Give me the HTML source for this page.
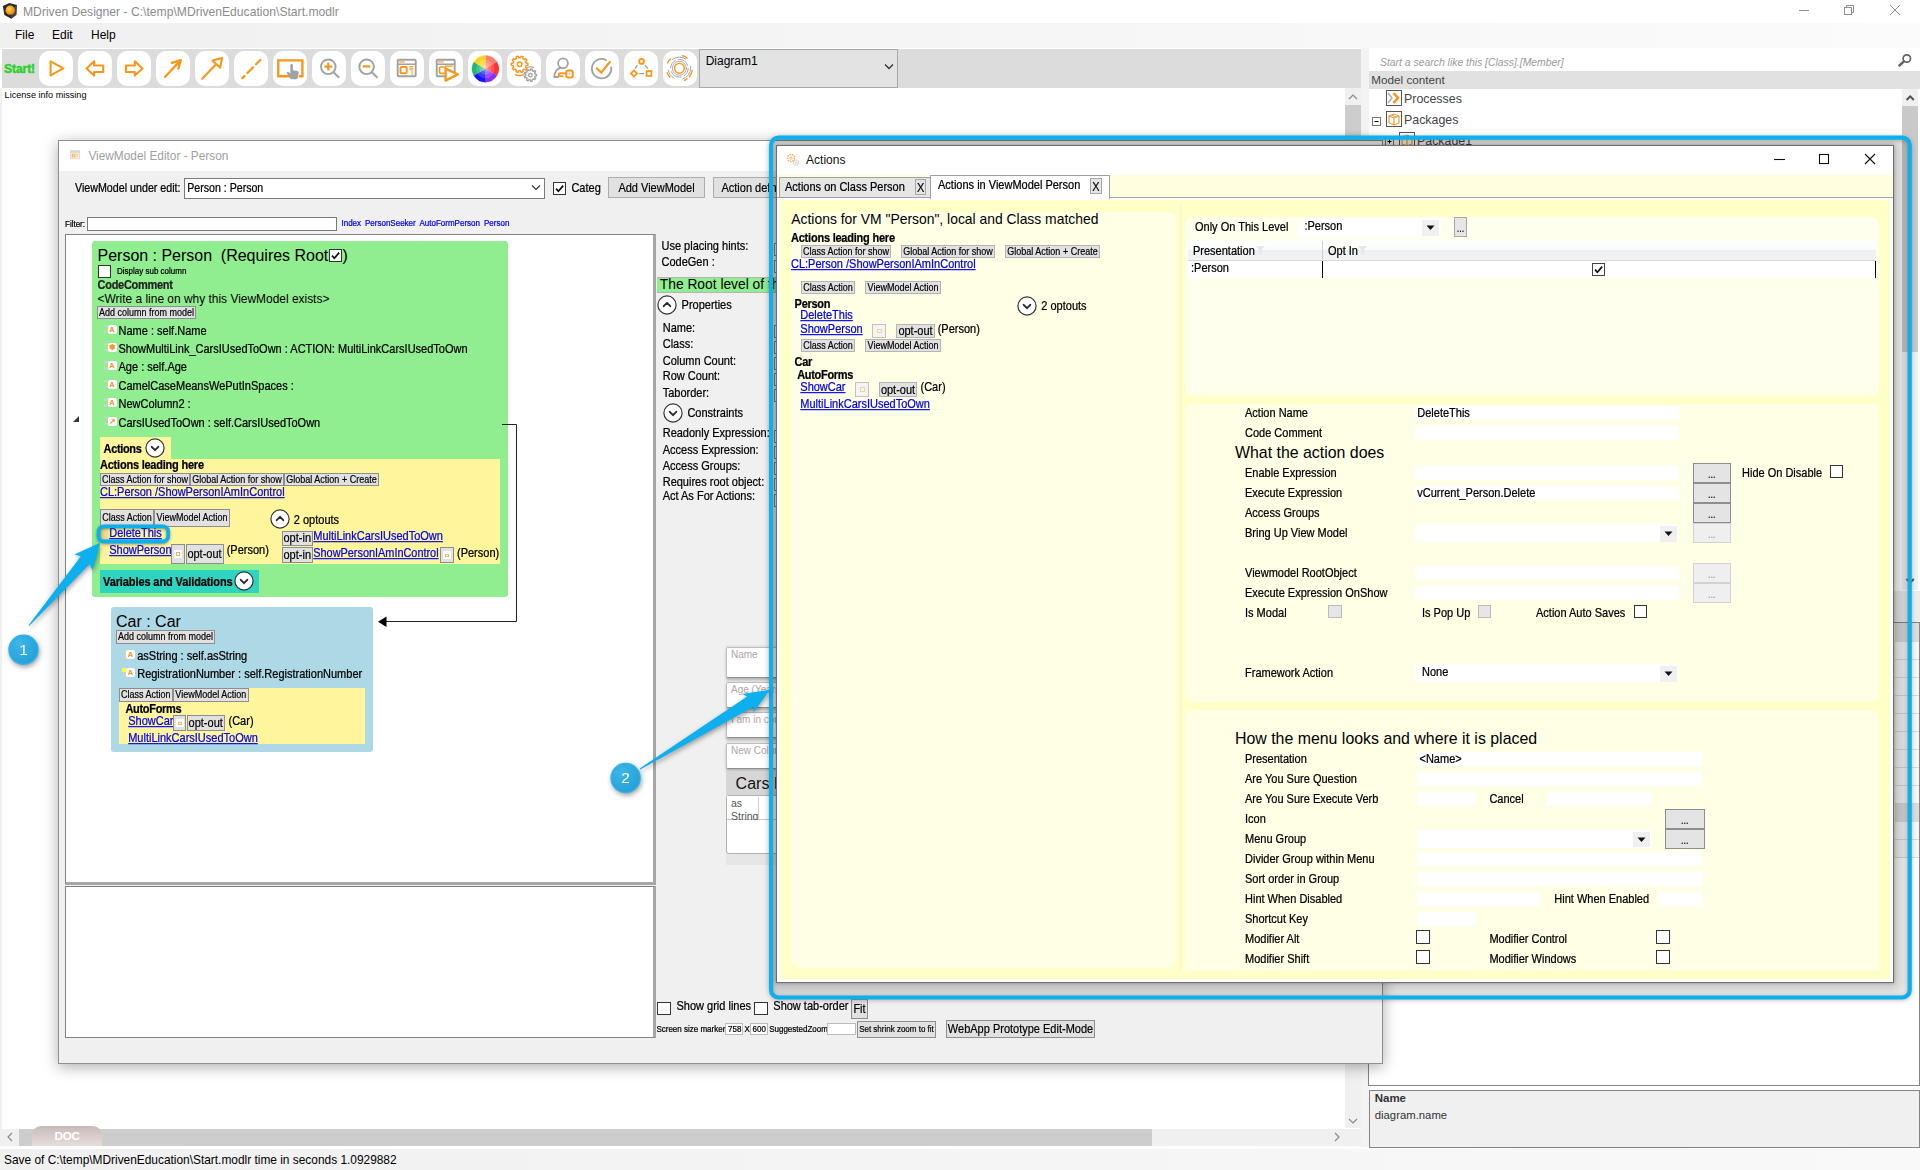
<!DOCTYPE html>
<html><head><meta charset="utf-8"><title>MDriven Designer</title><style>
html,body{margin:0;padding:0}
body{width:1920px;height:1170px;position:relative;overflow:hidden;background:#fff;font-family:"Liberation Sans",sans-serif;}
.t{position:absolute;white-space:pre;line-height:1;}
.r{position:absolute;box-sizing:border-box;}
.b{text-align:center;white-space:pre;overflow:hidden;}
</style></head><body>
<svg class="r" style="left:0;top:0" width="22" height="22" viewBox="0 0 22 22"><defs><radialGradient id="og" cx="0.4" cy="0.35" r="0.7"><stop offset="0" stop-color="#ffd36b"/><stop offset="0.6" stop-color="#fb9a14"/><stop offset="1" stop-color="#e07b00"/></radialGradient></defs><path d="M2.8,5.9 L9.4,3.1 L17,5 L16.4,14.7 L11.3,18.7 L4.4,15 Z" fill="#2b2b2b"/><path d="M17,5 L16.4,14.7 L11.3,18.7 L11.6,9 Z" fill="#555" opacity="0.6"/><circle cx="10.2" cy="10.3" r="4.7" fill="url(#og)"/></svg>
<span class="t" style="left:23.0px;top:5.92px;font-size:12.15px;color:#8c8c8c;">MDriven Designer - C:\temp\MDrivenEducation\Start.modlr</span>
<svg class="r" style="left:1790px;top:0" width="130" height="22" viewBox="1790 0 130 22"><g stroke="#8f8f8f" stroke-width="1" fill="none"><path d="M1799,10.5 H1809"/><rect x="1844.5" y="7.5" width="7" height="7"/><path d="M1846.5,7.5 V5.5 H1853.5 V12.5 H1851.5"/><path d="M1890,5 L1900,15 M1900,5 L1890,15"/></g></svg>
<div class="r" style="left:0.0px;top:23.0px;width:1920.0px;height:25.0px;background:linear-gradient(90deg,#f0f0f0,#fbfbfb);"></div>
<span class="t" style="left:15.0px;top:29.24px;font-size:12px;">File</span>
<span class="t" style="left:52.0px;top:29.24px;font-size:12px;">Edit</span>
<span class="t" style="left:91.0px;top:29.24px;font-size:12px;">Help</span>
<div class="r" style="left:2.0px;top:49.0px;width:1359.0px;height:39.0px;background:#dcdcdc;"></div>
<span class="t" style="left:4.0px;top:62.74px;font-size:12px;color:#2fcf2f;font-weight:bold;letter-spacing:-0.05px;-webkit-text-stroke:0.5px #2fcf2f;">Start!</span>
<div class="r" style="left:39.0px;top:51.0px;width:34.0px;height:35.0px;background:#fff;border-radius:10px;"></div>
<div class="r" style="left:78.0px;top:51.0px;width:34.0px;height:35.0px;background:#fff;border-radius:10px;"></div>
<div class="r" style="left:117.0px;top:51.0px;width:34.0px;height:35.0px;background:#fff;border-radius:10px;"></div>
<div class="r" style="left:156.0px;top:51.0px;width:34.0px;height:35.0px;background:#fff;border-radius:10px;"></div>
<div class="r" style="left:195.0px;top:51.0px;width:34.0px;height:35.0px;background:#fff;border-radius:10px;"></div>
<div class="r" style="left:234.0px;top:51.0px;width:34.0px;height:35.0px;background:#fff;border-radius:10px;"></div>
<div class="r" style="left:273.0px;top:51.0px;width:34.0px;height:35.0px;background:#fff;border-radius:10px;"></div>
<div class="r" style="left:312.0px;top:51.0px;width:34.0px;height:35.0px;background:#fff;border-radius:10px;"></div>
<div class="r" style="left:351.0px;top:51.0px;width:34.0px;height:35.0px;background:#fff;border-radius:10px;"></div>
<div class="r" style="left:390.0px;top:51.0px;width:34.0px;height:35.0px;background:#fff;border-radius:10px;"></div>
<div class="r" style="left:429.0px;top:51.0px;width:34.0px;height:35.0px;background:#fff;border-radius:10px;"></div>
<div class="r" style="left:468.0px;top:51.0px;width:34.0px;height:35.0px;background:#fff;border-radius:10px;"></div>
<div class="r" style="left:507.0px;top:51.0px;width:34.0px;height:35.0px;background:#fff;border-radius:10px;"></div>
<div class="r" style="left:546.0px;top:51.0px;width:34.0px;height:35.0px;background:#fff;border-radius:10px;"></div>
<div class="r" style="left:585.0px;top:51.0px;width:34.0px;height:35.0px;background:#fff;border-radius:10px;"></div>
<div class="r" style="left:624.0px;top:51.0px;width:34.0px;height:35.0px;background:#fff;border-radius:10px;"></div>
<div class="r" style="left:663.0px;top:51.0px;width:34.0px;height:35.0px;background:#fff;border-radius:10px;"></div>
<svg class="r" style="left:39px;top:51px" width="34" height="35" viewBox="0 0 34 35" fill="none" stroke-linecap="round" stroke-linejoin="round"><path d="M11.6,10.4 L24.3,17.4 L11.6,24.4 Z" stroke="#f7981d" stroke-width="2.1"/></svg>
<svg class="r" style="left:78px;top:51px" width="34" height="35" viewBox="0 0 34 35" fill="none" stroke-linecap="round" stroke-linejoin="round"><path d="M8.6,17.4 L16.1,10.3 V14.5 H25.2 V21 H16.1 V24.6 Z" stroke="#f7981d" stroke-width="2.1"/></svg>
<svg class="r" style="left:117px;top:51px" width="34" height="35" viewBox="0 0 34 35" fill="none" stroke-linecap="round" stroke-linejoin="round"><path d="M25.5,17.4 L17.8,10.3 V14.5 H8.9 V21 H17.8 V24.6 Z" stroke="#f7981d" stroke-width="2.1"/></svg>
<svg class="r" style="left:156px;top:51px" width="34" height="35" viewBox="0 0 34 35" fill="none" stroke-linecap="round" stroke-linejoin="round"><path d="M9.2,25.8 L24.6,9.4 M15.8,11.8 L24.8,9.1 L22.4,17.6" stroke="#f7981d" stroke-width="2.3"/></svg>
<svg class="r" style="left:195px;top:51px" width="34" height="35" viewBox="0 0 34 35" fill="none" stroke-linecap="round" stroke-linejoin="round"><path d="M7.2,27.8 L21,13.3 M17.4,9.6 L27,7 L25.2,16.6 Z" stroke="#f7981d" stroke-width="2.1"/></svg>
<svg class="r" style="left:234px;top:51px" width="34" height="35" viewBox="0 0 34 35" fill="none" stroke-linecap="round" stroke-linejoin="round"><path d="M8.4,27.1 L26.3,9" stroke="#f7981d" stroke-width="2.3" stroke-dasharray="3 4.2 8 4.2 6"/></svg>
<svg class="r" style="left:273px;top:51px" width="34" height="35" viewBox="0 0 34 35" fill="none" stroke-linecap="round" stroke-linejoin="round"><path d="M16,25.3 H5.3 V9.4 H29.4 V25.3 H27" stroke="#f7981d" stroke-width="2.4" stroke-linejoin="miter"/><path d="M17.3,14.2 a1.3,1.3 0 0 1 2.6,0 v5 l4.5,0.8 a1.6,1.6 0 0 1 1.3,1.8 l-0.7,4.6 a2,2 0 0 1 -2,1.8 h-4.2 a2,2 0 0 1 -1.7,-0.9 l-3.2,-4.8 a1.2,1.2 0 0 1 1.8,-1.5 l1.6,1.5 z" fill="#a2a2a2" stroke="none"/></svg>
<svg class="r" style="left:312px;top:51px" width="34" height="35" viewBox="0 0 34 35" fill="none" stroke-linecap="round" stroke-linejoin="round"><circle cx="16.3" cy="15.8" r="7.3" stroke="#a2a2a2" stroke-width="1.9"/><path d="M21.6,21.2 L26.6,26.2" stroke="#a2a2a2" stroke-width="2"/><path d="M13.3,15.6 H19.3 M16.3,12.6 V18.6" stroke="#f7981d" stroke-width="2.4"/></svg>
<svg class="r" style="left:351px;top:51px" width="34" height="35" viewBox="0 0 34 35" fill="none" stroke-linecap="round" stroke-linejoin="round"><circle cx="15.6" cy="15.8" r="7.3" stroke="#a2a2a2" stroke-width="1.9"/><path d="M20.9,21.2 L25.9,26.2" stroke="#a2a2a2" stroke-width="2"/><path d="M13,15.4 H18.2" stroke="#f7981d" stroke-width="2.4"/></svg>
<svg class="r" style="left:390px;top:51px" width="34" height="35" viewBox="0 0 34 35" fill="none" stroke-linecap="round" stroke-linejoin="round"><rect x="7.7" y="8.8" width="18" height="16.4" rx="1" stroke="#a2a2a2" stroke-width="1.9"/><path d="M7.7,13.2 H25.7" stroke="#a2a2a2" stroke-width="1.6"/><path d="M9.8,10.9 h4.2" stroke="#f7981d" stroke-width="1.3" stroke-dasharray="0.6 1.2"/><rect x="10.5" y="16" width="6.2" height="6.3" rx="1" stroke="#f7981d" stroke-width="1.9"/><path d="M19.8,15.6 h3.2 M19.8,17.2 h3.2 M19.8,18.8 h3.2 M21.5,21 h1.5 M21.5,23 h1.5" stroke="#f7981d" stroke-width="1"/></svg>
<svg class="r" style="left:429px;top:51px" width="34" height="35" viewBox="0 0 34 35" fill="none" stroke-linecap="round" stroke-linejoin="round"><rect x="7.7" y="8.8" width="18" height="16.4" rx="1" stroke="#a2a2a2" stroke-width="1.9"/><path d="M7.7,13.2 H25.7" stroke="#a2a2a2" stroke-width="1.6"/><path d="M9.8,10.9 h4.2" stroke="#f7981d" stroke-width="1.3" stroke-dasharray="0.6 1.2"/><rect x="10.5" y="16" width="6.2" height="6.3" rx="1" stroke="#f7981d" stroke-width="1.7"/><path d="M16.6,15.2 h7" stroke="#f7981d" stroke-width="1.2"/><path d="M13,23 H31 V33 H13 Z" fill="#fff" stroke="none" opacity="0"/><path d="M16.6,17.6 L28.8,23.4 L16.6,29.6 Z" stroke="#f7981d" stroke-width="2.3" fill="#fff"/></svg>
<svg class="r" style="left:468px;top:51px" width="34" height="35" viewBox="0 0 34 35" fill="none" stroke-linecap="round" stroke-linejoin="round"><path d="M17.4,17.8 L17.40,4.40 A13.4,13.4 0 0 1 29.00,11.10 Z" fill="#ff7a6b" stroke="#ff7a6b" stroke-width="0.3"/><path d="M17.4,17.8 L29.00,11.10 A13.4,13.4 0 0 1 29.00,24.50 Z" fill="#ff3232" stroke="#ff3232" stroke-width="0.3"/><path d="M17.4,17.8 L29.00,24.50 A13.4,13.4 0 0 1 17.40,31.20 Z" fill="#8b2dff" stroke="#8b2dff" stroke-width="0.3"/><path d="M17.4,17.8 L17.40,31.20 A13.4,13.4 0 0 1 5.80,24.50 Z" fill="#1414ff" stroke="#1414ff" stroke-width="0.3"/><path d="M17.4,17.8 L5.80,24.50 A13.4,13.4 0 0 1 5.80,11.10 Z" fill="#22b573" stroke="#22b573" stroke-width="0.3"/><path d="M17.4,17.8 L5.80,11.10 A13.4,13.4 0 0 1 17.40,4.40 Z" fill="#ffd21f" stroke="#ffd21f" stroke-width="0.3"/><circle cx="17.4" cy="17.8" r="9.3" fill="#fff" fill-opacity="0.16" stroke="none"/><circle cx="17.4" cy="17.8" r="6" fill="#fff" fill-opacity="0.18" stroke="none"/><circle cx="17.4" cy="17.8" r="3" fill="#fff" fill-opacity="0.2" stroke="none"/></svg>
<svg class="r" style="left:507px;top:51px" width="34" height="35" viewBox="0 0 34 35" fill="none" stroke-linecap="round" stroke-linejoin="round"><path d="M19.08,12.06 L20.85,12.36 L20.85,14.24 L19.08,14.54 L18.57,16.11 L19.82,17.39 L18.72,18.91 L17.12,18.11 L15.78,19.08 L16.04,20.85 L14.26,21.43 L13.43,19.85 L11.77,19.85 L10.94,21.43 L9.16,20.85 L9.42,19.08 L8.08,18.11 L6.48,18.91 L5.38,17.39 L6.63,16.11 L6.12,14.54 L4.35,14.24 L4.35,12.36 L6.12,12.06 L6.63,10.49 L5.38,9.21 L6.48,7.69 L8.08,8.49 L9.42,7.52 L9.16,5.75 L10.94,5.17 L11.77,6.75 L13.43,6.75 L14.26,5.17 L16.04,5.75 L15.78,7.52 L17.12,8.49 L18.72,7.69 L19.82,9.21 L18.57,10.49 Z" stroke="#f7981d" stroke-width="1.5"/><circle cx="12.6" cy="13.3" r="2.3" stroke="#f7981d" stroke-width="1.5"/><path d="M8.2,23.6 q4.4,2 8.6,0" stroke="#f7981d" stroke-width="1.2"/><path d="M28.10,23.10 L29.55,23.32 L29.55,24.88 L28.10,25.10 L27.64,26.35 L28.61,27.46 L27.61,28.65 L26.36,27.88 L25.20,28.55 L25.23,30.02 L23.70,30.29 L23.23,28.90 L21.92,28.67 L21.00,29.82 L19.65,29.04 L20.19,27.67 L19.33,26.64 L17.89,26.93 L17.35,25.47 L18.65,24.77 L18.65,23.43 L17.35,22.73 L17.89,21.27 L19.33,21.56 L20.19,20.53 L19.65,19.16 L21.00,18.38 L21.92,19.53 L23.23,19.30 L23.70,17.91 L25.23,18.18 L25.20,19.65 L26.36,20.32 L27.61,19.55 L28.61,20.74 L27.64,21.85 Z" stroke="#a2a2a2" stroke-width="1.4"/><circle cx="23.4" cy="24.1" r="1.8" stroke="#a2a2a2" stroke-width="1.3"/><path d="M20.6,16.4 q3,-1.4 6,0.2" stroke="#a2a2a2" stroke-width="1.1"/></svg>
<svg class="r" style="left:546px;top:51px" width="34" height="35" viewBox="0 0 34 35" fill="none" stroke-linecap="round" stroke-linejoin="round"><circle cx="17" cy="12.3" r="4.9" stroke="#a2a2a2" stroke-width="1.8"/><path d="M12.2,26 H8.2 q0.4,-7.4 6.4,-9.4" stroke="#a2a2a2" stroke-width="1.8"/><rect x="20.3" y="19.6" width="6.4" height="6.8" rx="1.6" stroke="#f7981d" stroke-width="2"/><path d="M20.3,22.2 H14.2 a1.5,1.5 0 0 0 0,3 H16.5" stroke="#f7981d" stroke-width="1.9"/><circle cx="23.6" cy="23" r="0.7" fill="#f7981d" stroke="none"/></svg>
<svg class="r" style="left:585px;top:51px" width="34" height="35" viewBox="0 0 34 35" fill="none" stroke-linecap="round" stroke-linejoin="round"><path d="M21,9 A9.7,9.7 0 1 0 26.2,16.4" stroke="#a2a2a2" stroke-width="1.9"/><path d="M11.8,17.3 L16.2,21.6 L24.8,11" stroke="#f7981d" stroke-width="2.2" stroke-linejoin="miter"/></svg>
<svg class="r" style="left:624px;top:51px" width="34" height="35" viewBox="0 0 34 35" fill="none" stroke-linecap="round" stroke-linejoin="round"><circle cx="17.6" cy="10.4" r="2.4" stroke="#f7981d" stroke-width="1.9"/><rect x="22.6" y="20.1" width="4.8" height="4.8" stroke="#f7981d" stroke-width="1.8" stroke-linejoin="miter"/><path d="M10,19.4 L13.1,22.5 L10,25.6 L6.9,22.5 Z" stroke="#f7981d" stroke-width="1.8" stroke-linejoin="miter"/><path d="M13,14.6 L11.3,17.3 M21.4,14.6 L23.5,17.4 M15.5,22.6 H19.6" stroke="#a2a2a2" stroke-width="1.3"/></svg>
<svg class="r" style="left:663px;top:51px" width="34" height="35" viewBox="0 0 34 35" fill="none" stroke-linecap="round" stroke-linejoin="round"><circle cx="16.4" cy="17.3" r="4.9" stroke="#f7981d" stroke-width="1.4"/><circle cx="16.4" cy="17.3" r="7" stroke="#a2a2a2" stroke-width="0.9"/><circle cx="16.4" cy="17.3" r="8.8" stroke="#a2a2a2" stroke-width="1" stroke-dasharray="9 3 12 4"/><circle cx="16.4" cy="17.3" r="11.2" stroke="#a2a2a2" stroke-width="1" stroke-dasharray="14 9 10 12"/><circle cx="16.4" cy="17.3" r="13" stroke="#f7981d" stroke-width="1.4" stroke-dasharray="5 14 7 3 3 16 5 10" transform="rotate(-75 16.4 17.3)"/></svg>
<div class="r" style="left:699.0px;top:49.0px;width:199.0px;height:39.0px;background:#e3e3e3;border:1px solid #a8a8a8;"></div>
<span class="t" style="left:705.7px;top:54.74px;font-size:12px;">Diagram1</span>
<svg class="r" style="left:884px;top:63px" width="10" height="8" viewBox="0 0 10 8"><path d="M1,1.5 L5,5.5 L9,1.5" fill="none" stroke="#333" stroke-width="1.3"/></svg>
<span class="t" style="left:4.6px;top:90.50px;font-size:9.1px;">License info missing</span>
<div class="r" style="left:0.0px;top:88.0px;width:2.0px;height:1041.0px;background:#f0f0f0;"></div>
<div class="r" style="left:1345.0px;top:88.0px;width:16.0px;height:1040.0px;background:#f0f0f0;"></div>
<div class="r" style="left:1345.0px;top:105.0px;width:16.0px;height:455.0px;background:#cdcdcd;"></div>
<svg class="r" style="left:1345px;top:90px" width="16" height="14" viewBox="0 0 16 14"><path d="M4,9 L8,5 L12,9" fill="none" stroke="#8a8a8a" stroke-width="1.2"/></svg>
<svg class="r" style="left:1345px;top:1114px" width="16" height="14" viewBox="0 0 16 14"><path d="M4,5 L8,9 L12,5" fill="none" stroke="#8a8a8a" stroke-width="1.2"/></svg>
<div class="r" style="left:0.0px;top:1129.0px;width:1361.0px;height:17.0px;background:#f0f0f0;"></div>
<div class="r" style="left:19.0px;top:1129.3px;width:1133.0px;height:16.7px;background:#cdcdcd;"></div>
<svg class="r" style="left:2px;top:1129px" width="16" height="16" viewBox="0 0 16 16"><path d="M10,4 L6,8 L10,12" fill="none" stroke="#8a8a8a" stroke-width="1.2"/></svg>
<svg class="r" style="left:1329px;top:1129px" width="16" height="16" viewBox="0 0 16 16"><path d="M6,4 L10,8 L6,12" fill="none" stroke="#8a8a8a" stroke-width="1.2"/></svg>
<div class="r" style="left:31.8px;top:1125.8px;width:70.2px;height:20.2px;background:linear-gradient(#c9baba,#e6dddd);border-radius:9px 9px 0 0;"></div>
<span class="t" style="left:54.6px;top:1130.38px;font-size:11.6px;color:#fff;font-weight:bold;letter-spacing:-0.2px;font-family:"DejaVu Sans","Liberation Sans",sans-serif;">DOC</span>
<div class="r" style="left:0.0px;top:1149.0px;width:1920.0px;height:21.0px;background:linear-gradient(90deg,#f0f0f0,#f9f9f9);"></div>
<span class="t" style="left:4.0px;top:1154.93px;font-size:11.9px;">Save of C:\temp\MDrivenEducation\Start.modlr time in seconds 1.0929882</span>
<div class="r" style="left:1361.0px;top:48.0px;width:8.0px;height:1099.0px;background:#f3f3f3;"></div>
<div class="r" style="left:1369.0px;top:48.0px;width:551.0px;height:23.0px;background:#fff;"></div>
<span class="t" style="left:1380.0px;top:57.80px;font-size:10.4px;color:#9a9a9a;font-style:italic;">Start a search like this [Class].[Member]</span>
<svg class="r" style="left:1892px;top:50px" width="24" height="20" viewBox="1892 50 24 20"><circle cx="1906.8" cy="58.5" r="3.7" fill="none" stroke="#626262" stroke-width="1.7"/><path d="M1904,61.4 L1899.4,65.5" stroke="#626262" stroke-width="2.4" stroke-linecap="round"/></svg>
<div class="r" style="left:1369.0px;top:71.0px;width:551.0px;height:18.0px;background:#e1e1e1;"></div>
<span class="t" style="left:1371.3px;top:74.00px;font-size:11.7px;color:#444;">Model content</span>
<div class="r" style="left:1369.0px;top:89.0px;width:551.0px;height:997.0px;background:#fff;border-bottom:1px solid #b4b4b4;"></div>
<svg class="r" style="left:1386px;top:90px" width="17" height="17" viewBox="0 0 17 17"><rect x="0.5" y="0.5" width="15" height="15" fill="#fff" stroke="#555"/><path d="M2,3 L6,8 L2,13" fill="none" stroke="#b0b0b0" stroke-width="1.6"/><path d="M7.5,3 L12,8 L7.5,13" fill="none" stroke="#f7941d" stroke-width="2.6"/></svg>
<span class="t" style="left:1404.0px;top:93.40px;font-size:12.4px;color:#444;">Processes</span>
<svg class="r" style="left:1372px;top:117px" width="10" height="10" viewBox="0 0 10 10"><rect x="0.5" y="0.5" width="8" height="8" fill="#fff" stroke="#777"/><path d="M2.5,4.5 H6.5" stroke="#000"/></svg>
<svg class="r" style="left:1386px;top:111px" width="17" height="17" viewBox="0 0 17 17"><rect x="0.5" y="0.5" width="15" height="15" fill="#fff" stroke="#555"/><path d="M3,5 L8,3 L13,5 L13,12 L8,14 L3,12 Z M3,5 L8,7 L13,5 M8,7 V14" fill="none" stroke="#f7941d" stroke-width="1.1"/><path d="M5.5,4 L10.5,6" stroke="#aaa" stroke-width="1"/></svg>
<span class="t" style="left:1404.0px;top:114.30px;font-size:12.4px;color:#444;">Packages</span>
<svg class="r" style="left:1385px;top:137px" width="10" height="10" viewBox="0 0 10 10"><rect x="0.5" y="0.5" width="8" height="8" fill="#fff" stroke="#777"/><path d="M2.5,4.5 H6.5 M4.5,2.5 V6.5" stroke="#000"/></svg>
<svg class="r" style="left:1399px;top:132px" width="17" height="17" viewBox="0 0 17 17"><rect x="0.5" y="0.5" width="15" height="15" fill="#fff" stroke="#555"/><path d="M3,5 L8,3 L13,5 L13,12 L8,14 L3,12 Z M3,5 L8,7 L13,5 M8,7 V14" fill="none" stroke="#f7941d" stroke-width="1.1"/><path d="M5.5,4 L10.5,6" stroke="#aaa" stroke-width="1"/></svg>
<span class="t" style="left:1417.0px;top:135.30px;font-size:12.4px;color:#444;">Package1</span>
<div class="r" style="left:1902.0px;top:89.0px;width:16.0px;height:501.0px;background:#f0f0f0;"></div>
<div class="r" style="left:1902.0px;top:105.5px;width:16.0px;height:246.5px;background:#c9c9c9;"></div>
<svg class="r" style="left:1902px;top:91px" width="17" height="14" viewBox="0 0 17 14"><path d="M4.6,9 L8.2,5.4 L11.8,9" fill="none" stroke="#505050" stroke-width="2"/></svg>
<svg class="r" style="left:1902px;top:574px" width="17" height="14" viewBox="0 0 17 14"><path d="M4.6,5 L8.2,8.6 L11.8,5" fill="none" stroke="#505050" stroke-width="2"/></svg>
<div class="r" style="left:1369.0px;top:590.8px;width:551.0px;height:31.2px;background:#ececec;"></div>
<div class="r" style="left:1368.0px;top:622.0px;width:552.0px;height:464.0px;background:#f7f7f7;border:1px solid #858585;"></div>
<div class="r" style="left:1895.0px;top:623.0px;width:24.0px;height:18.0px;background:#dcdcdc;"></div>
<div class="r" style="left:1895.0px;top:641.0px;width:24.0px;height:1.0px;background:#dadada;"></div>
<div class="r" style="left:1895.0px;top:659.0px;width:24.0px;height:1.0px;background:#dadada;"></div>
<div class="r" style="left:1895.0px;top:677.0px;width:24.0px;height:1.0px;background:#dadada;"></div>
<div class="r" style="left:1895.0px;top:695.0px;width:24.0px;height:1.0px;background:#dadada;"></div>
<div class="r" style="left:1895.0px;top:713.0px;width:24.0px;height:1.0px;background:#dadada;"></div>
<div class="r" style="left:1895.0px;top:731.0px;width:24.0px;height:1.0px;background:#dadada;"></div>
<div class="r" style="left:1895.0px;top:749.0px;width:24.0px;height:1.0px;background:#dadada;"></div>
<div class="r" style="left:1895.0px;top:767.0px;width:24.0px;height:1.0px;background:#dadada;"></div>
<div class="r" style="left:1895.0px;top:785.0px;width:24.0px;height:1.0px;background:#dadada;"></div>
<div class="r" style="left:1895.0px;top:803.0px;width:24.0px;height:1.0px;background:#dadada;"></div>
<div class="r" style="left:1895.0px;top:804.0px;width:24.0px;height:17.0px;background:#dcdcdc;"></div>
<div class="r" style="left:1895.0px;top:821.0px;width:24.0px;height:1.0px;background:#dadada;"></div>
<div class="r" style="left:1895.0px;top:839.0px;width:24.0px;height:1.0px;background:#dadada;"></div>
<div class="r" style="left:1895.0px;top:857.0px;width:24.0px;height:1.0px;background:#dadada;"></div>
<div class="r" style="left:1369.0px;top:858.0px;width:550.0px;height:227.0px;background:#fff;"></div>
<div class="r" style="left:1369.0px;top:1089.5px;width:551.0px;height:58.0px;background:#f0f0f0;border:1px solid #858585;"></div>
<span class="t" style="left:1374.7px;top:1093.17px;font-size:11.5px;color:#333;font-weight:bold;">Name</span>
<span class="t" style="left:1374.7px;top:1109.93px;font-size:11.3px;color:#333;letter-spacing:0.02px;">diagram.name</span>
<div class="r" style="left:58.0px;top:140.0px;width:1325.0px;height:924.0px;background:#f0f0f0;border:1px solid #8f8f8f;box-shadow:0 3px 14px rgba(0,0,0,0.32);"></div>
<div class="r" style="left:59.0px;top:141.0px;width:1323.0px;height:30.0px;background:#fff;"></div>
<svg class="r" style="left:70px;top:150px" width="11" height="10" viewBox="0 0 11 10"><rect x="0.5" y="0.8" width="9" height="8" fill="#fdebd2" stroke="#dcdcdc"/><rect x="0.5" y="0.8" width="9" height="2" fill="#d6d6d6"/><rect x="2.3" y="4.3" width="2.6" height="2.6" fill="none" stroke="#f7a84a" stroke-width="0.8"/><path d="M6.3,4.5 h1.6 M6.3,6 h1.6" stroke="#f7a84a" stroke-width="0.6"/></svg>
<span class="t" style="left:88.4px;top:150.57px;font-size:11.85px;color:#a0a0a0;">ViewModel Editor - Person</span>
<span class="t" style="left:75.0px;top:182.84px;font-size:10.7px;transform:scaleY(1.13);transform-origin:0 84.65%;-webkit-text-stroke:0.22px;">ViewModel under edit:</span>
<div class="r" style="left:184.0px;top:178.0px;width:361.0px;height:21.0px;background:#fff;border:1px solid #7a7a7a;"></div>
<span class="t" style="left:187.3px;top:182.93px;font-size:10.6px;transform:scaleY(1.13);transform-origin:0 84.65%;-webkit-text-stroke:0.22px;">Person : Person</span>
<svg class="r" style="left:531px;top:184px" width="10" height="8" viewBox="0 0 10 8"><path d="M1,1.5 L5,5.5 L9,1.5" fill="none" stroke="#333" stroke-width="1.1"/></svg>
<div class="r" style="left:553.0px;top:181.5px;width:13.0px;height:13.0px;background:#fff;border:1px solid #333;"><svg width="11" height="11" viewBox="0 0 12 12" style="position:absolute;left:0;top:0"><path d="M2.2,6.2 L4.8,9 L10,2.8" fill="none" stroke="#111" stroke-width="1.9"/></svg></div>
<span class="t" style="left:571.4px;top:182.99px;font-size:11px;transform:scaleY(1.13);transform-origin:0 84.65%;-webkit-text-stroke:0.22px;">Categ</span>
<div class="r b" style="left:608.0px;top:177.0px;width:97.0px;height:21.0px;background:#e1e1e1;border:1px solid #adadad;font-size:11px;line-height:20.6px;color:#000;"><span style="display:inline-block;line-height:1;transform:scaleY(1.13);transform-origin:50% 84.65%;-webkit-text-stroke:0.18px">Add ViewModel</span></div>
<div class="r b" style="left:713.0px;top:177.0px;width:72.0px;height:21.0px;background:#e1e1e1;border:1px solid #adadad;font-size:11px;line-height:20.6px;color:#000;"><span style="display:inline-block;line-height:1;transform:scaleY(1.13);transform-origin:50% 84.65%;-webkit-text-stroke:0.18px">Action defn</span></div>
<span class="t" style="left:65.0px;top:221.13px;font-size:8px;transform:scaleY(1.08);transform-origin:0 84.65%;-webkit-text-stroke:0.22px;">Filter:</span>
<div class="r" style="left:87.0px;top:217.0px;width:250.0px;height:14.0px;background:#fff;border:1px solid #7a7a7a;"></div>
<span class="t" style="left:341.5px;top:220.43px;font-size:8px;color:#0000ee;transform:scaleY(1.08);transform-origin:0 84.65%;-webkit-text-stroke:0.22px;">Index</span>
<span class="t" style="left:365.0px;top:220.43px;font-size:8px;color:#0000ee;transform:scaleY(1.08);transform-origin:0 84.65%;-webkit-text-stroke:0.22px;">PersonSeeker</span>
<span class="t" style="left:419.5px;top:220.43px;font-size:8px;color:#0000ee;transform:scaleY(1.08);transform-origin:0 84.65%;-webkit-text-stroke:0.22px;">AutoFormPerson</span>
<span class="t" style="left:484.0px;top:220.43px;font-size:8px;color:#0000ee;transform:scaleY(1.08);transform-origin:0 84.65%;-webkit-text-stroke:0.22px;">Person</span>
<div class="r" style="left:65.0px;top:234.0px;width:591.0px;height:651.0px;background:#fff;border:1px solid #828282;border-right:3px solid #a6a6a6;border-bottom:3px solid #a6a6a6;"></div>
<div class="r" style="left:65.0px;top:886.0px;width:591.0px;height:152.0px;background:#fff;border:1px solid #828282;border-right:3px solid #a6a6a6;"></div>
<div class="r" style="left:92.0px;top:241.0px;width:416.0px;height:356.0px;background:#90ee90;border-radius:3px;"></div>
<span class="t" style="left:97.6px;top:247.86px;font-size:16px;letter-spacing:-0.02px;">Person : Person  (Requires Root</span>
<div class="r" style="left:328.5px;top:248.5px;width:13.0px;height:13.0px;background:#fff;border:1px solid #333;"><svg width="11" height="11" viewBox="0 0 12 12" style="position:absolute;left:0;top:0"><path d="M2.2,6.2 L4.8,9 L10,2.8" fill="none" stroke="#111" stroke-width="1.9"/></svg></div>
<span class="t" style="left:342.5px;top:247.86px;font-size:16px;">)</span>
<div class="r" style="left:98.0px;top:264.7px;width:13.3px;height:13.0px;background:#fff;border:1px solid #333;"></div>
<span class="t" style="left:117.0px;top:267.63px;font-size:8px;transform:scaleY(1.08);transform-origin:0 84.65%;-webkit-text-stroke:0.22px;">Display sub column</span>
<span class="t" style="left:97.6px;top:279.89px;font-size:11px;color:#222;font-weight:bold;letter-spacing:-0.3px;transform:scaleY(1.13);transform-origin:0 84.65%;-webkit-text-stroke:0.22px;">CodeComment</span>
<span class="t" style="left:97.6px;top:294.08px;font-size:11.95px;">&lt;Write a line on why this ViewModel exists&gt;</span>
<div class="r b" style="left:97.0px;top:306.0px;width:99.0px;height:13.0px;background:#e1e1e1;border:1px solid #8e8e8e;font-size:9px;line-height:12.2px;color:#000;"><span style="display:inline-block;line-height:1;transform:scaleY(1.15);transform-origin:50% 84.65%;-webkit-text-stroke:0.18px">Add column from model</span></div>
<div class="r" style="left:103.5px;top:324.6px;width:4px;height:2.6px;border-radius:1px;background:#cfcfcf"></div>
<div class="r" style="left:103.5px;top:330.6px;width:4px;height:2.6px;border-radius:1px;background:#cfcfcf"></div>
<div class="r" style="left:107.5px;top:324.5px;width:9px;height:9px;background:#fff;border-radius:2px;color:#f7941d;font-size:7.5px;line-height:9.5px;text-align:center;font-weight:bold">A</div>
<span class="t" style="left:118.5px;top:325.89px;font-size:11px;transform:scaleY(1.13);transform-origin:0 84.65%;-webkit-text-stroke:0.22px;">Name : self.Name</span>
<div class="r" style="left:103.5px;top:342.7px;width:4px;height:2.6px;border-radius:1px;background:#cfcfcf"></div>
<div class="r" style="left:103.5px;top:348.7px;width:4px;height:2.6px;border-radius:1px;background:#cfcfcf"></div>
<div class="r" style="left:107.5px;top:342.6px;width:9px;height:9px;background:#fff;border-radius:2px;color:#f7941d;font-size:7.5px;line-height:9.5px;text-align:center;font-weight:bold">✱</div>
<span class="t" style="left:118.5px;top:343.99px;font-size:11px;transform:scaleY(1.13);transform-origin:0 84.65%;-webkit-text-stroke:0.22px;">ShowMultiLink_CarsIUsedToOwn : ACTION: MultiLinkCarsIUsedToOwn</span>
<div class="r" style="left:103.5px;top:361.2px;width:4px;height:2.6px;border-radius:1px;background:#cfcfcf"></div>
<div class="r" style="left:103.5px;top:367.2px;width:4px;height:2.6px;border-radius:1px;background:#cfcfcf"></div>
<div class="r" style="left:107.5px;top:361.1px;width:9px;height:9px;background:#fff;border-radius:2px;color:#f7941d;font-size:7.5px;line-height:9.5px;text-align:center;font-weight:bold">A</div>
<span class="t" style="left:118.5px;top:362.49px;font-size:11px;transform:scaleY(1.13);transform-origin:0 84.65%;-webkit-text-stroke:0.22px;">Age : self.Age</span>
<div class="r" style="left:103.5px;top:379.8px;width:4px;height:2.6px;border-radius:1px;background:#cfcfcf"></div>
<div class="r" style="left:103.5px;top:385.8px;width:4px;height:2.6px;border-radius:1px;background:#cfcfcf"></div>
<div class="r" style="left:107.5px;top:379.7px;width:9px;height:9px;background:#fff;border-radius:2px;color:#f7941d;font-size:7.5px;line-height:9.5px;text-align:center;font-weight:bold">A</div>
<span class="t" style="left:118.5px;top:381.09px;font-size:11px;transform:scaleY(1.13);transform-origin:0 84.65%;-webkit-text-stroke:0.22px;">CamelCaseMeansWePutInSpaces :</span>
<div class="r" style="left:103.5px;top:398.0px;width:4px;height:2.6px;border-radius:1px;background:#cfcfcf"></div>
<div class="r" style="left:103.5px;top:404.0px;width:4px;height:2.6px;border-radius:1px;background:#cfcfcf"></div>
<div class="r" style="left:107.5px;top:397.9px;width:9px;height:9px;background:#fff;border-radius:2px;color:#f7941d;font-size:7.5px;line-height:9.5px;text-align:center;font-weight:bold">A</div>
<span class="t" style="left:118.5px;top:399.29px;font-size:11px;transform:scaleY(1.13);transform-origin:0 84.65%;-webkit-text-stroke:0.22px;">NewColumn2 :</span>
<div class="r" style="left:103.5px;top:416.8px;width:4px;height:2.6px;border-radius:1px;background:#cfcfcf"></div>
<div class="r" style="left:103.5px;top:422.8px;width:4px;height:2.6px;border-radius:1px;background:#cfcfcf"></div>
<div class="r" style="left:107.5px;top:416.7px;width:9px;height:9px;background:#fff;border-radius:2px;color:#f7941d;font-size:7.5px;line-height:9.5px;text-align:center;font-weight:bold">↗</div>
<span class="t" style="left:118.5px;top:418.09px;font-size:11px;transform:scaleY(1.13);transform-origin:0 84.65%;-webkit-text-stroke:0.22px;">CarsIUsedToOwn : self.CarsIUsedToOwn</span>
<svg class="r" style="left:72px;top:415px" width="8" height="8" viewBox="0 0 8 8"><path d="M7,1 V7 H1 Z" fill="#333"/></svg>
<div class="r" style="left:100.0px;top:437.0px;width:71.0px;height:22.0px;background:#fff59d;"></div>
<span class="t" style="left:103.6px;top:444.29px;font-size:11px;font-weight:bold;letter-spacing:-0.35px;transform:scaleY(1.13);transform-origin:0 84.65%;-webkit-text-stroke:0.22px;">Actions</span>
<svg class="r" style="left:145.4px;top:438.1px" width="20" height="20" viewBox="-10 -10 20 20"><circle r="9.1" fill="#fff" stroke="#333" stroke-width="1.2"/><path d="M-3.3,-1.7 L0,1.7 L3.3,-1.7" fill="none" stroke="#2a2a2a" stroke-width="1.9" stroke-linecap="round" stroke-linejoin="round" transform="translate(0,0.5)"/></svg>
<div class="r" style="left:100.0px;top:459.0px;width:400.0px;height:105.0px;background:#fff59d;"></div>
<span class="t" style="left:100.0px;top:459.89px;font-size:11px;font-weight:bold;letter-spacing:-0.22px;transform:scaleY(1.13);transform-origin:0 84.65%;-webkit-text-stroke:0.22px;">Actions leading here</span>
<div class="r b" style="left:100.0px;top:472.5px;width:90.0px;height:13.0px;background:#e1e1e1;border:1px solid #8e8e8e;font-size:9px;line-height:12.2px;color:#000;"><span style="display:inline-block;line-height:1;transform:scaleY(1.15);transform-origin:50% 84.65%;-webkit-text-stroke:0.18px">Class Action for show</span></div>
<div class="r b" style="left:190.0px;top:472.5px;width:94.0px;height:13.0px;background:#e1e1e1;border:1px solid #8e8e8e;font-size:9px;line-height:12.2px;color:#000;"><span style="display:inline-block;line-height:1;transform:scaleY(1.15);transform-origin:50% 84.65%;-webkit-text-stroke:0.18px">Global Action for show</span></div>
<div class="r b" style="left:284.0px;top:472.5px;width:95.0px;height:13.0px;background:#e1e1e1;border:1px solid #8e8e8e;font-size:9px;line-height:12.2px;color:#000;"><span style="display:inline-block;line-height:1;transform:scaleY(1.15);transform-origin:50% 84.65%;-webkit-text-stroke:0.18px">Global Action + Create</span></div>
<span class="t" style="left:100.0px;top:486.69px;font-size:11px;color:#0000ee;transform:scaleY(1.13);transform-origin:0 84.65%;-webkit-text-stroke:0.22px;text-decoration:underline;">CL:Person /ShowPersonIAmInControl</span>
<div class="r b" style="left:100.0px;top:508.5px;width:54.0px;height:18.5px;background:#e1e1e1;border:1px solid #8e8e8e;font-size:9px;line-height:17.7px;color:#000;"><span style="display:inline-block;line-height:1;transform:scaleY(1.15);transform-origin:50% 84.65%;-webkit-text-stroke:0.18px">Class Action</span></div>
<div class="r b" style="left:154.0px;top:508.5px;width:76.0px;height:18.5px;background:#e1e1e1;border:1px solid #8e8e8e;font-size:9px;line-height:17.7px;color:#000;"><span style="display:inline-block;line-height:1;transform:scaleY(1.15);transform-origin:50% 84.65%;-webkit-text-stroke:0.18px">ViewModel Action</span></div>
<svg class="r" style="left:270.0px;top:509.3px" width="20" height="20" viewBox="-10 -10 20 20"><circle r="9.1" fill="#fff" stroke="#333" stroke-width="1.2"/><path d="M-3.3,1.7 L0,-1.7 L3.3,1.7" fill="none" stroke="#2a2a2a" stroke-width="1.9" stroke-linecap="round" stroke-linejoin="round" transform="translate(0,-0.5)"/></svg>
<span class="t" style="left:293.8px;top:515.09px;font-size:11px;transform:scaleY(1.13);transform-origin:0 84.65%;-webkit-text-stroke:0.22px;">2 optouts</span>
<span class="t" style="left:109.2px;top:527.69px;font-size:11px;color:#0000ee;transform:scaleY(1.13);transform-origin:0 84.65%;-webkit-text-stroke:0.22px;text-decoration:underline;">DeleteThis</span>
<span class="t" style="left:109.2px;top:544.59px;font-size:11px;color:#0000ee;transform:scaleY(1.13);transform-origin:0 84.65%;-webkit-text-stroke:0.22px;text-decoration:underline;">ShowPerson</span>
<div class="r" style="left:171.0px;top:543.5px;width:14.0px;height:20.0px;background:#e1e1e1;border:1px solid #8e8e8e;"></div>
<div class="r" style="left:174.0px;top:549.5px;width:8.0px;height:8.0px;background:#fff;"></div>
<div class="r" style="left:176.0px;top:552.0px;width:4.0px;height:3.5px;border:1px solid #f7b45e;"></div>
<div class="r b" style="left:185.5px;top:543.5px;width:38.0px;height:20.0px;background:#e1e1e1;border:1px solid #8e8e8e;font-size:11px;line-height:19.0px;color:#000;"><span style="display:inline-block;line-height:1;transform:scaleY(1.13);transform-origin:50% 84.65%;-webkit-text-stroke:0.18px">opt-out</span></div>
<span class="t" style="left:226.7px;top:544.59px;font-size:11px;transform:scaleY(1.13);transform-origin:0 84.65%;-webkit-text-stroke:0.22px;">(Person)</span>
<div class="r b" style="left:282.0px;top:530.5px;width:30.5px;height:15.5px;background:#e1e1e1;border:1px solid #8e8e8e;font-size:11px;line-height:13.5px;color:#000;"><span style="display:inline-block;line-height:1;transform:scaleY(1.13);transform-origin:50% 84.65%;-webkit-text-stroke:0.18px">opt-in</span></div>
<div class="r b" style="left:282.0px;top:547.0px;width:30.5px;height:16.0px;background:#e1e1e1;border:1px solid #8e8e8e;font-size:11px;line-height:14.0px;color:#000;"><span style="display:inline-block;line-height:1;transform:scaleY(1.13);transform-origin:50% 84.65%;-webkit-text-stroke:0.18px">opt-in</span></div>
<span class="t" style="left:313.3px;top:530.99px;font-size:11px;color:#0000ee;transform:scaleY(1.13);transform-origin:0 84.65%;-webkit-text-stroke:0.22px;text-decoration:underline;">MultiLinkCarsIUsedToOwn</span>
<span class="t" style="left:313.3px;top:547.77px;font-size:10.9px;color:#0000ee;transform:scaleY(1.13);transform-origin:0 84.65%;-webkit-text-stroke:0.22px;text-decoration:underline;">ShowPersonIAmInControl</span>
<div class="r" style="left:440.3px;top:547.0px;width:13.3px;height:16.0px;background:#e1e1e1;border:1px solid #8e8e8e;"></div>
<div class="r" style="left:443.0px;top:551.0px;width:8.0px;height:8.0px;background:#fff;"></div>
<div class="r" style="left:445.0px;top:553.5px;width:4.0px;height:3.5px;border:1px solid #f7b45e;"></div>
<span class="t" style="left:457.0px;top:547.69px;font-size:11px;transform:scaleY(1.13);transform-origin:0 84.65%;-webkit-text-stroke:0.22px;">(Person)</span>
<div class="r" style="left:100.0px;top:570.0px;width:159.0px;height:23.0px;background:#2dd4bf;"></div>
<span class="t" style="left:103.0px;top:576.69px;font-size:11px;font-weight:bold;letter-spacing:-0.1px;transform:scaleY(1.13);transform-origin:0 84.65%;-webkit-text-stroke:0.22px;">Variables and Validations</span>
<svg class="r" style="left:233.8px;top:571.1px" width="20" height="20" viewBox="-10 -10 20 20"><circle r="9.1" fill="#fff" stroke="#333" stroke-width="1.2"/><path d="M-3.3,-1.7 L0,1.7 L3.3,-1.7" fill="none" stroke="#2a2a2a" stroke-width="1.9" stroke-linecap="round" stroke-linejoin="round" transform="translate(0,0.5)"/></svg>
<svg class="r" style="left:370px;top:415px" width="160" height="220" viewBox="370 415 160 220"><path d="M502,424.5 H516.5 V621.5 H386" fill="none" stroke="#222" stroke-width="1"/><path d="M378,621.8 L386.5,616.5 V627 Z" fill="#000"/></svg>
<div class="r" style="left:111.0px;top:607.0px;width:262.0px;height:145.0px;background:#add8e6;border-radius:3px;"></div>
<span class="t" style="left:116.0px;top:614.26px;font-size:16px;">Car : Car</span>
<div class="r b" style="left:116.0px;top:630.3px;width:99.0px;height:13.7px;background:#e1e1e1;border:1px solid #8e8e8e;font-size:9px;line-height:12.9px;color:#000;"><span style="display:inline-block;line-height:1;transform:scaleY(1.15);transform-origin:50% 84.65%;-webkit-text-stroke:0.18px">Add column from model</span></div>
<div class="r" style="left:122.0px;top:650.2px;width:4px;height:2.6px;border-radius:1px;background:#cfcfcf"></div>
<div class="r" style="left:122.0px;top:656.2px;width:4px;height:2.6px;border-radius:1px;background:#cfcfcf"></div>
<div class="r" style="left:126.0px;top:650.1px;width:9px;height:9px;background:#fff;border-radius:2px;color:#f7941d;font-size:7.5px;line-height:9.5px;text-align:center;font-weight:bold">A</div>
<span class="t" style="left:137.2px;top:651.49px;font-size:11px;transform:scaleY(1.13);transform-origin:0 84.65%;-webkit-text-stroke:0.22px;">asString : self.asString</span>
<div class="r" style="left:122.0px;top:668.2px;width:4px;height:2.6px;border-radius:1px;background:#cfcfcf"></div>
<div class="r" style="left:122.0px;top:674.2px;width:4px;height:2.6px;border-radius:1px;background:#cfcfcf"></div>
<div class="r" style="left:126.0px;top:668.1px;width:9px;height:9px;background:#fff;border-radius:2px;color:#f7941d;font-size:7.5px;line-height:9.5px;text-align:center;font-weight:bold">A</div>
<span class="t" style="left:137.2px;top:669.49px;font-size:11px;transform:scaleY(1.13);transform-origin:0 84.65%;-webkit-text-stroke:0.22px;">RegistrationNumber : self.RegistrationNumber</span>
<div class="r" style="left:122.0px;top:668.0px;width:4.0px;height:3.5px;background:#ffff33;"></div>
<div class="r" style="left:119.0px;top:688.0px;width:246.0px;height:56.0px;background:#fff59d;"></div>
<div class="r b" style="left:119.0px;top:688.0px;width:53.5px;height:14.0px;background:#e1e1e1;border:1px solid #8e8e8e;font-size:9px;line-height:13.2px;color:#000;"><span style="display:inline-block;line-height:1;transform:scaleY(1.15);transform-origin:50% 84.65%;-webkit-text-stroke:0.18px">Class Action</span></div>
<div class="r b" style="left:172.5px;top:688.0px;width:76.5px;height:14.0px;background:#e1e1e1;border:1px solid #8e8e8e;font-size:9px;line-height:13.2px;color:#000;"><span style="display:inline-block;line-height:1;transform:scaleY(1.15);transform-origin:50% 84.65%;-webkit-text-stroke:0.18px">ViewModel Action</span></div>
<span class="t" style="left:125.4px;top:703.79px;font-size:11px;font-weight:bold;letter-spacing:-0.3px;transform:scaleY(1.13);transform-origin:0 84.65%;-webkit-text-stroke:0.22px;">AutoForms</span>
<span class="t" style="left:128.2px;top:715.89px;font-size:11px;color:#0000ee;transform:scaleY(1.13);transform-origin:0 84.65%;-webkit-text-stroke:0.22px;text-decoration:underline;">ShowCar</span>
<div class="r" style="left:173.4px;top:715.0px;width:12.6px;height:16.0px;background:#e1e1e1;border:1px solid #8e8e8e;"></div>
<div class="r" style="left:175.7px;top:719.0px;width:8.0px;height:8.0px;background:#fff;"></div>
<div class="r" style="left:177.7px;top:721.5px;width:4.0px;height:3.5px;border:1px solid #f7b45e;"></div>
<div class="r b" style="left:186.8px;top:715.0px;width:37.8px;height:16.0px;background:#e1e1e1;border:1px solid #8e8e8e;font-size:11px;line-height:15.0px;color:#000;"><span style="display:inline-block;line-height:1;transform:scaleY(1.13);transform-origin:50% 84.65%;-webkit-text-stroke:0.18px">opt-out</span></div>
<span class="t" style="left:228.5px;top:715.89px;font-size:11px;transform:scaleY(1.13);transform-origin:0 84.65%;-webkit-text-stroke:0.22px;">(Car)</span>
<span class="t" style="left:128.2px;top:732.59px;font-size:11px;color:#0000ee;transform:scaleY(1.13);transform-origin:0 84.65%;-webkit-text-stroke:0.22px;text-decoration:underline;">MultiLinkCarsIUsedToOwn</span>
<span class="t" style="left:661.5px;top:241.29px;font-size:11px;transform:scaleY(1.13);transform-origin:0 84.65%;-webkit-text-stroke:0.22px;">Use placing hints:</span>
<span class="t" style="left:661.5px;top:257.29px;font-size:11px;transform:scaleY(1.13);transform-origin:0 84.65%;-webkit-text-stroke:0.22px;">CodeGen :</span>
<div class="r" style="left:657.0px;top:276.5px;width:133.0px;height:16.0px;background:#90ee90;border-top:1px solid #b4b4b4;border-bottom:1px solid #b4b4b4;"></div>
<span class="t" style="left:659.8px;top:277.52px;font-size:13.8px;">The Root level of the</span>
<svg class="r" style="left:657.3px;top:294.6px" width="20" height="20" viewBox="-10 -10 20 20"><circle r="9.1" fill="#fff" stroke="#333" stroke-width="1.2"/><path d="M-3.3,1.7 L0,-1.7 L3.3,1.7" fill="none" stroke="#2a2a2a" stroke-width="1.9" stroke-linecap="round" stroke-linejoin="round" transform="translate(0,-0.5)"/></svg>
<span class="t" style="left:681.6px;top:300.29px;font-size:11px;transform:scaleY(1.13);transform-origin:0 84.65%;-webkit-text-stroke:0.22px;">Properties</span>
<span class="t" style="left:662.7px;top:323.29px;font-size:11px;transform:scaleY(1.13);transform-origin:0 84.65%;-webkit-text-stroke:0.22px;">Name:</span>
<span class="t" style="left:662.7px;top:339.29px;font-size:11px;transform:scaleY(1.13);transform-origin:0 84.65%;-webkit-text-stroke:0.22px;">Class:</span>
<span class="t" style="left:662.7px;top:356.09px;font-size:11px;transform:scaleY(1.13);transform-origin:0 84.65%;-webkit-text-stroke:0.22px;">Column Count:</span>
<span class="t" style="left:662.7px;top:371.29px;font-size:11px;transform:scaleY(1.13);transform-origin:0 84.65%;-webkit-text-stroke:0.22px;">Row Count:</span>
<span class="t" style="left:662.7px;top:387.99px;font-size:11px;transform:scaleY(1.13);transform-origin:0 84.65%;-webkit-text-stroke:0.22px;">Taborder:</span>
<svg class="r" style="left:663.0px;top:402.9px" width="20" height="20" viewBox="-10 -10 20 20"><circle r="9.1" fill="#fff" stroke="#333" stroke-width="1.2"/><path d="M-3.3,-1.7 L0,1.7 L3.3,-1.7" fill="none" stroke="#2a2a2a" stroke-width="1.9" stroke-linecap="round" stroke-linejoin="round" transform="translate(0,0.5)"/></svg>
<span class="t" style="left:687.4px;top:408.29px;font-size:11px;transform:scaleY(1.13);transform-origin:0 84.65%;-webkit-text-stroke:0.22px;">Constraints</span>
<span class="t" style="left:662.7px;top:428.19px;font-size:11px;transform:scaleY(1.13);transform-origin:0 84.65%;-webkit-text-stroke:0.22px;">Readonly Expression:</span>
<span class="t" style="left:662.7px;top:444.99px;font-size:11px;transform:scaleY(1.13);transform-origin:0 84.65%;-webkit-text-stroke:0.22px;">Access Expression:</span>
<span class="t" style="left:662.7px;top:460.69px;font-size:11px;transform:scaleY(1.13);transform-origin:0 84.65%;-webkit-text-stroke:0.22px;">Access Groups:</span>
<span class="t" style="left:662.7px;top:476.69px;font-size:11px;transform:scaleY(1.13);transform-origin:0 84.65%;-webkit-text-stroke:0.22px;">Requires root object:</span>
<span class="t" style="left:662.7px;top:491.29px;font-size:11px;transform:scaleY(1.13);transform-origin:0 84.65%;-webkit-text-stroke:0.22px;">Act As For Actions:</span>
<div class="r" style="left:774.0px;top:243.0px;width:26.0px;height:13.0px;background:#fff;border:1px solid #8a8a8a;"></div>
<div class="r" style="left:774.0px;top:260.0px;width:26.0px;height:13.0px;background:#fff;border:1px solid #8a8a8a;"></div>
<div class="r" style="left:774.0px;top:325.0px;width:26.0px;height:13.0px;background:#fff;border:1px solid #8a8a8a;"></div>
<div class="r" style="left:774.0px;top:341.0px;width:26.0px;height:13.0px;background:#fff;border:1px solid #8a8a8a;"></div>
<div class="r" style="left:774.0px;top:357.0px;width:26.0px;height:13.0px;background:#fff;border:1px solid #8a8a8a;"></div>
<div class="r" style="left:774.0px;top:373.0px;width:26.0px;height:13.0px;background:#fff;border:1px solid #8a8a8a;"></div>
<div class="r" style="left:774.0px;top:389.0px;width:26.0px;height:13.0px;background:#fff;border:1px solid #8a8a8a;"></div>
<div class="r" style="left:774.0px;top:430.0px;width:26.0px;height:13.0px;background:#fff;border:1px solid #8a8a8a;"></div>
<div class="r" style="left:774.0px;top:446.0px;width:26.0px;height:13.0px;background:#fff;border:1px solid #8a8a8a;"></div>
<div class="r" style="left:774.0px;top:462.0px;width:26.0px;height:13.0px;background:#fff;border:1px solid #8a8a8a;"></div>
<div class="r" style="left:774.0px;top:478.0px;width:26.0px;height:13.0px;background:#fff;border:1px solid #8a8a8a;"></div>
<div class="r" style="left:774.0px;top:494.0px;width:26.0px;height:13.0px;background:#fff;border:1px solid #8a8a8a;"></div>
<div class="r" style="left:726.0px;top:645.0px;width:74.0px;height:220.0px;background:#e6e6e6;"></div>
<div class="r" style="left:726.0px;top:647.0px;width:74.0px;height:30.6px;background:#fff;border:1px solid #bdbdbd;border-bottom:1px solid #8f8f8f;border-radius:2px;box-shadow:0 2px 3px rgba(0,0,0,0.22);"></div>
<span class="t" style="left:731.0px;top:649.93px;font-size:10px;color:#b3a5a5;">Name</span>
<div class="r" style="left:726.0px;top:681.7px;width:74.0px;height:26.3px;background:#fff;border:1px solid #bdbdbd;border-bottom:1px solid #8f8f8f;border-radius:2px;box-shadow:0 2px 3px rgba(0,0,0,0.22);"></div>
<span class="t" style="left:731.0px;top:684.63px;font-size:10px;color:#b3a5a5;">Age (Years)</span>
<div class="r" style="left:726.0px;top:712.0px;width:74.0px;height:26.0px;background:#fff;border:1px solid #bdbdbd;border-bottom:1px solid #8f8f8f;border-radius:2px;box-shadow:0 2px 3px rgba(0,0,0,0.22);"></div>
<span class="t" style="left:731.0px;top:714.93px;font-size:10px;color:#b3a5a5;">I am in control</span>
<div class="r" style="left:726.0px;top:742.9px;width:74.0px;height:25.8px;background:#fff;border:1px solid #bdbdbd;border-bottom:1px solid #8f8f8f;border-radius:2px;box-shadow:0 2px 3px rgba(0,0,0,0.22);"></div>
<span class="t" style="left:731.0px;top:745.83px;font-size:10px;color:#b3a5a5;">New Column2</span>
<div class="r" style="left:726.0px;top:770.8px;width:74.0px;height:24.6px;background:#d6d6d6;"></div>
<span class="t" style="left:735.6px;top:775.66px;font-size:16px;color:#111;">Cars I used</span>
<div class="r" style="left:726.0px;top:795.4px;width:74.0px;height:58.6px;background:#fff;border:1px solid #b0b0b0;border-radius:3px;"></div>
<div class="r" style="left:727.0px;top:796.0px;width:73.0px;height:24.0px;background:#fff;border-bottom:1px solid #c8c8c8;"></div>
<div class="r" style="left:731px;top:797px;width:26.5px;height:23px;overflow:hidden;font-size:10.5px;line-height:12.6px;color:#555;white-space:pre">as
String</div>
<div class="r" style="left:757.5px;top:797.0px;width:1.0px;height:23.0px;background:#d0d0d0;"></div>
<div class="r" style="left:657.2px;top:1001.7px;width:13.6px;height:13.3px;background:#fff;border:1px solid #333;"></div>
<span class="t" style="left:676.5px;top:1001.29px;font-size:11px;transform:scaleY(1.13);transform-origin:0 84.65%;-webkit-text-stroke:0.22px;">Show grid lines</span>
<div class="r" style="left:754.0px;top:1001.7px;width:13.6px;height:13.3px;background:#fff;border:1px solid #333;"></div>
<span class="t" style="left:773.3px;top:1001.29px;font-size:11px;transform:scaleY(1.13);transform-origin:0 84.65%;-webkit-text-stroke:0.22px;">Show tab-order</span>
<div class="r b" style="left:851.3px;top:998.5px;width:16.4px;height:20.5px;background:#e1e1e1;border:1px solid #8e8e8e;font-size:11px;line-height:18.5px;color:#000;"><span style="display:inline-block;line-height:1;transform:scaleY(1.13);transform-origin:50% 84.65%;-webkit-text-stroke:0.18px">Fit</span></div>
<span class="t" style="left:656.4px;top:1026.03px;font-size:8px;transform:scaleY(1.08);transform-origin:0 84.65%;-webkit-text-stroke:0.22px;">Screen size marker</span>
<div class="r" style="left:725.3px;top:1023.0px;width:18.1px;height:11.5px;background:#fff;border:1px solid #bbb;"></div>
<span class="t" style="left:728.0px;top:1026.03px;font-size:8px;transform:scaleY(1.08);transform-origin:0 84.65%;-webkit-text-stroke:0.22px;">758</span>
<span class="t" style="left:744.6px;top:1026.03px;font-size:8px;transform:scaleY(1.08);transform-origin:0 84.65%;-webkit-text-stroke:0.22px;">X</span>
<div class="r" style="left:749.5px;top:1023.0px;width:18.9px;height:11.5px;background:#fff;border:1px solid #bbb;"></div>
<span class="t" style="left:752.5px;top:1026.03px;font-size:8px;transform:scaleY(1.08);transform-origin:0 84.65%;-webkit-text-stroke:0.22px;">600</span>
<span class="t" style="left:769.2px;top:1026.03px;font-size:8px;transform:scaleY(1.08);transform-origin:0 84.65%;-webkit-text-stroke:0.22px;">SuggestedZoom</span>
<div class="r" style="left:827.0px;top:1023.0px;width:29.2px;height:11.5px;background:#fff;border:1px solid #bbb;"></div>
<div class="r b" style="left:857.4px;top:1021.0px;width:78.2px;height:16.6px;background:#e1e1e1;border:1px solid #8e8e8e;font-size:8px;line-height:16.4px;color:#000;"><span style="display:inline-block;line-height:1;transform:scaleY(1.08);transform-origin:50% 84.65%;-webkit-text-stroke:0.18px">Set shrink zoom to fit</span></div>
<div class="r b" style="left:946.0px;top:1020.0px;width:149.0px;height:18.0px;background:#e1e1e1;border:1px solid #8e8e8e;font-size:11px;line-height:17.6px;color:#000;"><span style="display:inline-block;line-height:1;transform:scaleY(1.13);transform-origin:50% 84.65%;-webkit-text-stroke:0.18px">WebApp Prototype Edit-Mode</span></div>
<div class="r" style="left:771.0px;top:138.0px;width:1138.5px;height:859.5px;background:rgba(0,0,0,0.085);border-radius:8px;"></div>
<div class="r" style="left:776.0px;top:144.5px;width:1118.0px;height:838.5px;background:#ffffc8;border:1px solid #707070;box-shadow:0 1px 10px 5px rgba(0,0,0,0.15),0 0 3px rgba(0,0,0,0.3);"></div>
<div class="r" style="left:777.0px;top:145.5px;width:1116.0px;height:836.5px;background:#fff;"></div>
<div class="r" style="left:780.0px;top:200.3px;width:1110.0px;height:778.7px;background:#ffffc8;"></div>
<svg class="r" style="left:786px;top:152.5px" width="15" height="14" viewBox="0 0 15 14" fill="none"><circle cx="5" cy="5" r="3.5" stroke="#f7b45e" stroke-width="1.5" stroke-dasharray="1.6 0.8"/><circle cx="5" cy="5" r="1.2" stroke="#f7b45e" stroke-width="0.9"/><circle cx="10" cy="9.6" r="2.6" stroke="#c9c9c9" stroke-width="1.2" stroke-dasharray="1.3 0.7"/><circle cx="10" cy="9.6" r="0.8" stroke="#c9c9c9" stroke-width="0.8"/></svg>
<span class="t" style="left:806.1px;top:153.84px;font-size:12px;color:#111;">Actions</span>
<svg class="r" style="left:1760px;top:146px" width="130" height="28" viewBox="0 0 130 28"><g stroke="#111" stroke-width="1.1" fill="none"><path d="M14,13.5 H25"/><rect x="59.5" y="8.5" width="9" height="9"/><path d="M105,8 L115,18 M115,8 L105,18"/></g></svg>
<div class="r" style="left:777.0px;top:175.0px;width:1116.0px;height:22.8px;background:#ffffe0;border-bottom:1px solid #a6a6a6;"></div>
<div class="r" style="left:779.0px;top:177.2px;width:152.0px;height:20.8px;background:#e6e6e6;border:1px solid #a0a0a0;"></div>
<span class="t" style="left:785.0px;top:181.89px;font-size:11px;transform:scaleY(1.13);transform-origin:0 84.65%;-webkit-text-stroke:0.22px;">Actions on Class Person</span>
<div class="r b" style="left:915.0px;top:179.3px;width:11.2px;height:15.7px;background:#e4e4e4;border:1px solid #a6a6a6;font-size:11px;line-height:16.1px;color:#000;"><span style="display:inline-block;line-height:1;transform:scaleY(1.13);transform-origin:50% 84.65%;-webkit-text-stroke:0.18px">X</span></div>
<div class="r" style="left:930.2px;top:175.3px;width:179.8px;height:23.7px;background:#fff;border:1px solid #a0a0a0;border-bottom:none;"></div>
<span class="t" style="left:938.0px;top:180.49px;font-size:11px;transform:scaleY(1.13);transform-origin:0 84.65%;-webkit-text-stroke:0.22px;">Actions in ViewModel Person</span>
<div class="r b" style="left:1090.0px;top:178.0px;width:12.0px;height:15.8px;background:#e6e6e6;border:1px solid #a6a6a6;font-size:11px;line-height:16.2px;color:#000;"><span style="display:inline-block;line-height:1;transform:scaleY(1.13);transform-origin:50% 84.65%;-webkit-text-stroke:0.18px">X</span></div>
<div class="r" style="left:791.0px;top:211.5px;width:384.5px;height:756.5px;background:#ffffe6;border-radius:9px;"></div>
<span class="t" style="left:791.3px;top:213.43px;font-size:13.9px;">Actions for VM "Person", local and Class matched</span>
<span class="t" style="left:791.0px;top:233.29px;font-size:11px;font-weight:bold;letter-spacing:-0.22px;transform:scaleY(1.13);transform-origin:0 84.65%;-webkit-text-stroke:0.22px;">Actions leading here</span>
<div class="r b" style="left:801.0px;top:244.6px;width:90.0px;height:13.0px;background:#e1e1e1;border:1px solid #b4b4b4;font-size:9px;line-height:12.2px;color:#000;"><span style="display:inline-block;line-height:1;transform:scaleY(1.15);transform-origin:50% 84.65%;-webkit-text-stroke:0.18px">Class Action for show</span></div>
<div class="r b" style="left:901.0px;top:244.6px;width:94.0px;height:13.0px;background:#e1e1e1;border:1px solid #b4b4b4;font-size:9px;line-height:12.2px;color:#000;"><span style="display:inline-block;line-height:1;transform:scaleY(1.15);transform-origin:50% 84.65%;-webkit-text-stroke:0.18px">Global Action for show</span></div>
<div class="r b" style="left:1005.0px;top:244.6px;width:95.0px;height:13.0px;background:#e1e1e1;border:1px solid #b4b4b4;font-size:9px;line-height:12.2px;color:#000;"><span style="display:inline-block;line-height:1;transform:scaleY(1.15);transform-origin:50% 84.65%;-webkit-text-stroke:0.18px">Global Action + Create</span></div>
<span class="t" style="left:791.0px;top:258.99px;font-size:11px;color:#0000ee;transform:scaleY(1.13);transform-origin:0 84.65%;-webkit-text-stroke:0.22px;text-decoration:underline;">CL:Person /ShowPersonIAmInControl</span>
<div class="r b" style="left:801.0px;top:281.3px;width:54.0px;height:13.2px;background:#e1e1e1;border:1px solid #b4b4b4;font-size:9px;line-height:12.4px;color:#000;"><span style="display:inline-block;line-height:1;transform:scaleY(1.15);transform-origin:50% 84.65%;-webkit-text-stroke:0.18px">Class Action</span></div>
<div class="r b" style="left:865.0px;top:281.3px;width:76.0px;height:13.2px;background:#e1e1e1;border:1px solid #b4b4b4;font-size:9px;line-height:12.4px;color:#000;"><span style="display:inline-block;line-height:1;transform:scaleY(1.15);transform-origin:50% 84.65%;-webkit-text-stroke:0.18px">ViewModel Action</span></div>
<span class="t" style="left:794.6px;top:298.99px;font-size:11px;font-weight:bold;letter-spacing:-0.3px;transform:scaleY(1.13);transform-origin:0 84.65%;-webkit-text-stroke:0.22px;">Person</span>
<svg class="r" style="left:1017.0px;top:296.0px" width="20" height="20" viewBox="-10 -10 20 20"><circle r="9.1" fill="#fff" stroke="#333" stroke-width="1.2"/><path d="M-3.3,-1.7 L0,1.7 L3.3,-1.7" fill="none" stroke="#2a2a2a" stroke-width="1.9" stroke-linecap="round" stroke-linejoin="round" transform="translate(0,0.5)"/></svg>
<span class="t" style="left:1041.3px;top:300.79px;font-size:11px;transform:scaleY(1.13);transform-origin:0 84.65%;-webkit-text-stroke:0.22px;">2 optouts</span>
<span class="t" style="left:800.3px;top:310.49px;font-size:11px;color:#0000ee;transform:scaleY(1.13);transform-origin:0 84.65%;-webkit-text-stroke:0.22px;text-decoration:underline;">DeleteThis</span>
<span class="t" style="left:800.3px;top:323.89px;font-size:11px;color:#0000ee;transform:scaleY(1.13);transform-origin:0 84.65%;-webkit-text-stroke:0.22px;text-decoration:underline;">ShowPerson</span>
<div class="r" style="left:872.0px;top:323.6px;width:14.0px;height:14.6px;background:#f4f4f4;border:1px solid #c0c0c0;"></div>
<div class="r" style="left:876.5px;top:328.9px;width:5.0px;height:4.5px;border:1px solid #f9cf9c;"></div>
<div class="r b" style="left:896.0px;top:323.6px;width:39.0px;height:14.6px;background:#e1e1e1;border:1px solid #b4b4b4;font-size:11px;line-height:13.6px;color:#000;"><span style="display:inline-block;line-height:1;transform:scaleY(1.13);transform-origin:50% 84.65%;-webkit-text-stroke:0.18px">opt-out</span></div>
<span class="t" style="left:937.7px;top:323.89px;font-size:11px;transform:scaleY(1.13);transform-origin:0 84.65%;-webkit-text-stroke:0.22px;">(Person)</span>
<div class="r b" style="left:801.0px;top:339.2px;width:54.0px;height:13.2px;background:#e1e1e1;border:1px solid #b4b4b4;font-size:9px;line-height:12.4px;color:#000;"><span style="display:inline-block;line-height:1;transform:scaleY(1.15);transform-origin:50% 84.65%;-webkit-text-stroke:0.18px">Class Action</span></div>
<div class="r b" style="left:865.0px;top:339.2px;width:76.0px;height:13.2px;background:#e1e1e1;border:1px solid #b4b4b4;font-size:9px;line-height:12.4px;color:#000;"><span style="display:inline-block;line-height:1;transform:scaleY(1.15);transform-origin:50% 84.65%;-webkit-text-stroke:0.18px">ViewModel Action</span></div>
<span class="t" style="left:794.6px;top:357.19px;font-size:11px;font-weight:bold;letter-spacing:-0.3px;transform:scaleY(1.13);transform-origin:0 84.65%;-webkit-text-stroke:0.22px;">Car</span>
<span class="t" style="left:797.2px;top:369.99px;font-size:11px;font-weight:bold;letter-spacing:-0.3px;transform:scaleY(1.13);transform-origin:0 84.65%;-webkit-text-stroke:0.22px;">AutoForms</span>
<span class="t" style="left:800.3px;top:382.09px;font-size:11px;color:#0000ee;transform:scaleY(1.13);transform-origin:0 84.65%;-webkit-text-stroke:0.22px;text-decoration:underline;">ShowCar</span>
<div class="r" style="left:855.0px;top:381.5px;width:14.0px;height:15.0px;background:#f4f4f4;border:1px solid #c0c0c0;"></div>
<div class="r" style="left:859.5px;top:387.0px;width:5.0px;height:4.5px;border:1px solid #f9cf9c;"></div>
<div class="r b" style="left:879.0px;top:381.5px;width:38.0px;height:15.0px;background:#e1e1e1;border:1px solid #b4b4b4;font-size:11px;line-height:14.0px;color:#000;"><span style="display:inline-block;line-height:1;transform:scaleY(1.13);transform-origin:50% 84.65%;-webkit-text-stroke:0.18px">opt-out</span></div>
<span class="t" style="left:920.5px;top:382.09px;font-size:11px;transform:scaleY(1.13);transform-origin:0 84.65%;-webkit-text-stroke:0.22px;">(Car)</span>
<span class="t" style="left:800.3px;top:398.99px;font-size:11px;color:#0000ee;transform:scaleY(1.13);transform-origin:0 84.65%;-webkit-text-stroke:0.22px;text-decoration:underline;">MultiLinkCarsIUsedToOwn</span>
<div class="r" style="left:1179.0px;top:203.0px;width:2.8px;height:767.7px;background:#f9f9d0;"></div>
<div class="r" style="left:1185.0px;top:217.0px;width:694.0px;height:180.0px;background:linear-gradient(#ffffee 0%,#ffffee 96.5%,#ffffd8 100%);border-radius:8px;"></div>
<span class="t" style="left:1195.0px;top:222.29px;font-size:11px;transform:scaleY(1.13);transform-origin:0 84.65%;-webkit-text-stroke:0.22px;">Only On This Level</span>
<div class="r" style="left:1296.7px;top:218.0px;width:144.3px;height:19.0px;background:#fff;"></div>
<span class="t" style="left:1304.4px;top:220.89px;font-size:11px;transform:scaleY(1.13);transform-origin:0 84.65%;-webkit-text-stroke:0.22px;">:Person</span>
<div class="r" style="left:1421.5px;top:219.5px;width:17.5px;height:16.0px;background:#f0f0f0;"></div>
<svg class="r" style="left:1426px;top:224.5px" width="9" height="6" viewBox="0 0 9 6"><path d="M0.5,0.5 H8.5 L4.5,5 Z" fill="#111"/></svg>
<div class="r b" style="left:1453.8px;top:217.0px;width:13.2px;height:20.0px;background:#e6e6e6;border:1px solid #a8a8a8;font-size:9px;line-height:22.0px;color:#000;"><span style="display:inline-block;line-height:1;transform:scaleY(1.15);transform-origin:50% 84.65%;-webkit-text-stroke:0.18px">...</span></div>
<div class="r" style="left:1188.0px;top:240.5px;width:687.5px;height:20.0px;background:linear-gradient(#ffffff 0%,#fbfbfb 45%,#eff0f2 50%,#f2f3f4 100%);border-bottom:1px solid #d8d8d8;"></div>
<div class="r" style="left:1322.0px;top:241.0px;width:1.0px;height:19.0px;background:#d0d0d0;"></div>
<span class="t" style="left:1193.0px;top:245.89px;font-size:11px;transform:scaleY(1.13);transform-origin:0 84.65%;-webkit-text-stroke:0.22px;">Presentation</span>
<span class="t" style="left:1328.0px;top:245.89px;font-size:11px;transform:scaleY(1.13);transform-origin:0 84.65%;-webkit-text-stroke:0.22px;">Opt In</span>
<svg class="r" style="left:1256px;top:246px" width="10" height="10" viewBox="0 0 10 10"><path d="M0,0 H9 L5.5,4 V9 L3.5,7.5 V4 Z" fill="#e6e6e8"/></svg>
<svg class="r" style="left:1358px;top:246px" width="10" height="10" viewBox="0 0 10 10"><path d="M0,0 H9 L5.5,4 V9 L3.5,7.5 V4 Z" fill="#e6e6e8"/></svg>
<div class="r" style="left:1188.0px;top:261.0px;width:687.5px;height:17.0px;background:#fff;"></div>
<span class="t" style="left:1191.0px;top:263.29px;font-size:11px;transform:scaleY(1.13);transform-origin:0 84.65%;-webkit-text-stroke:0.22px;">:Person</span>
<div class="r" style="left:1322.0px;top:261.0px;width:1.0px;height:17.0px;background:#000;"></div>
<div class="r" style="left:1874.5px;top:261.0px;width:1.0px;height:17.0px;background:#000;"></div>
<div class="r" style="left:1592.0px;top:262.5px;width:13.0px;height:13.0px;background:#fff;border:1px solid #444;"><svg width="11" height="11" viewBox="0 0 12 12" style="position:absolute;left:0;top:0"><path d="M2.2,6.2 L4.8,9 L10,2.8" fill="none" stroke="#111" stroke-width="1.9"/></svg></div>
<div class="r" style="left:1185.0px;top:403.5px;width:694.0px;height:298.5px;background:#ffffe6;border-radius:8px;"></div>
<span class="t" style="left:1245.0px;top:408.29px;font-size:11px;transform:scaleY(1.13);transform-origin:0 84.65%;-webkit-text-stroke:0.22px;">Action Name</span>
<div class="r" style="left:1414.7px;top:406.1px;width:264.3px;height:14.1px;background:#fff;"></div>
<span class="t" style="left:1417.3px;top:408.29px;font-size:11px;transform:scaleY(1.13);transform-origin:0 84.65%;-webkit-text-stroke:0.22px;">DeleteThis</span>
<span class="t" style="left:1245.0px;top:428.29px;font-size:11px;transform:scaleY(1.13);transform-origin:0 84.65%;-webkit-text-stroke:0.22px;">Code Comment</span>
<div class="r" style="left:1414.7px;top:426.0px;width:264.3px;height:14.0px;background:#fff;"></div>
<span class="t" style="left:1235.0px;top:444.54px;font-size:15.9px;">What the action does</span>
<span class="t" style="left:1245.0px;top:468.29px;font-size:11px;transform:scaleY(1.13);transform-origin:0 84.65%;-webkit-text-stroke:0.22px;">Enable Expression</span>
<div class="r" style="left:1414.7px;top:466.0px;width:264.3px;height:14.0px;background:#fff;"></div>
<span class="t" style="left:1245.0px;top:488.29px;font-size:11px;transform:scaleY(1.13);transform-origin:0 84.65%;-webkit-text-stroke:0.22px;">Execute Expression</span>
<div class="r" style="left:1414.7px;top:486.0px;width:264.3px;height:14.0px;background:#fff;"></div>
<span class="t" style="left:1417.3px;top:488.29px;font-size:11px;transform:scaleY(1.13);transform-origin:0 84.65%;-webkit-text-stroke:0.22px;">vCurrent_Person.Delete</span>
<span class="t" style="left:1245.0px;top:508.29px;font-size:11px;transform:scaleY(1.13);transform-origin:0 84.65%;-webkit-text-stroke:0.22px;">Access Groups</span>
<span class="t" style="left:1245.0px;top:528.29px;font-size:11px;transform:scaleY(1.13);transform-origin:0 84.65%;-webkit-text-stroke:0.22px;">Bring Up View Model</span>
<div class="r" style="left:1414.7px;top:523.9px;width:263.3px;height:18.6px;background:#fff;"></div>
<div class="r" style="left:1660.0px;top:526.0px;width:17.0px;height:15.5px;background:#f0f0f0;"></div>
<svg class="r" style="left:1664px;top:531px" width="9" height="6" viewBox="0 0 9 6"><path d="M0.5,0.5 H8.5 L4.5,5 Z" fill="#111"/></svg>
<div class="r b" style="left:1692.5px;top:463.0px;width:38.5px;height:20.0px;background:#e4e4e4;border:1px solid #8e8e8e;font-size:9px;line-height:22.0px;color:#000;"><span style="display:inline-block;line-height:1;transform:scaleY(1.15);transform-origin:50% 84.65%;-webkit-text-stroke:0.18px">...</span></div>
<div class="r b" style="left:1692.5px;top:483.0px;width:38.5px;height:20.0px;background:#e4e4e4;border:1px solid #8e8e8e;font-size:9px;line-height:22.0px;color:#000;"><span style="display:inline-block;line-height:1;transform:scaleY(1.15);transform-origin:50% 84.65%;-webkit-text-stroke:0.18px">...</span></div>
<div class="r b" style="left:1692.5px;top:503.0px;width:38.5px;height:20.0px;background:#e4e4e4;border:1px solid #8e8e8e;font-size:9px;line-height:22.0px;color:#000;"><span style="display:inline-block;line-height:1;transform:scaleY(1.15);transform-origin:50% 84.65%;-webkit-text-stroke:0.18px">...</span></div>
<div class="r b" style="left:1692.5px;top:523.0px;width:38.5px;height:20.0px;background:#efefef;border:1px solid #d2d2d2;font-size:9px;line-height:22.0px;color:#a0a0a0;"><span style="display:inline-block;line-height:1;transform:scaleY(1.15);transform-origin:50% 84.65%;-webkit-text-stroke:0.18px">...</span></div>
<span class="t" style="left:1742.0px;top:467.59px;font-size:11px;transform:scaleY(1.13);transform-origin:0 84.65%;-webkit-text-stroke:0.22px;">Hide On Disable</span>
<div class="r" style="left:1829.5px;top:464.5px;width:13.5px;height:13.5px;background:#fff;border:1px solid #333;"></div>
<span class="t" style="left:1245.0px;top:568.29px;font-size:11px;transform:scaleY(1.13);transform-origin:0 84.65%;-webkit-text-stroke:0.22px;">Viewmodel RootObject</span>
<div class="r" style="left:1414.7px;top:566.0px;width:264.3px;height:14.0px;background:#fff;"></div>
<span class="t" style="left:1245.0px;top:588.29px;font-size:11px;transform:scaleY(1.13);transform-origin:0 84.65%;-webkit-text-stroke:0.22px;">Execute Expression OnShow</span>
<div class="r" style="left:1414.7px;top:586.0px;width:264.3px;height:14.0px;background:#fff;"></div>
<div class="r b" style="left:1692.5px;top:563.0px;width:38.5px;height:20.0px;background:#efefef;border:1px solid #d2d2d2;font-size:9px;line-height:22.0px;color:#a0a0a0;"><span style="display:inline-block;line-height:1;transform:scaleY(1.15);transform-origin:50% 84.65%;-webkit-text-stroke:0.18px">...</span></div>
<div class="r b" style="left:1692.5px;top:583.0px;width:38.5px;height:20.0px;background:#efefef;border:1px solid #d2d2d2;font-size:9px;line-height:22.0px;color:#a0a0a0;"><span style="display:inline-block;line-height:1;transform:scaleY(1.15);transform-origin:50% 84.65%;-webkit-text-stroke:0.18px">...</span></div>
<span class="t" style="left:1245.0px;top:608.29px;font-size:11px;transform:scaleY(1.13);transform-origin:0 84.65%;-webkit-text-stroke:0.22px;">Is Modal</span>
<div class="r" style="left:1328.0px;top:604.5px;width:13.5px;height:13.5px;background:#e6e6e6;border:1px solid #bcbcbc;"></div>
<span class="t" style="left:1422.0px;top:608.29px;font-size:11px;transform:scaleY(1.13);transform-origin:0 84.65%;-webkit-text-stroke:0.22px;">Is Pop Up</span>
<div class="r" style="left:1477.5px;top:604.5px;width:13.5px;height:13.5px;background:#e6e6e6;border:1px solid #bcbcbc;"></div>
<span class="t" style="left:1536.0px;top:608.29px;font-size:11px;transform:scaleY(1.13);transform-origin:0 84.65%;-webkit-text-stroke:0.22px;">Action Auto Saves</span>
<div class="r" style="left:1633.5px;top:604.5px;width:13.5px;height:13.5px;background:#fff;border:1px solid #333;"></div>
<span class="t" style="left:1245.0px;top:668.29px;font-size:11px;transform:scaleY(1.13);transform-origin:0 84.65%;-webkit-text-stroke:0.22px;">Framework Action</span>
<div class="r" style="left:1414.7px;top:663.9px;width:263.3px;height:18.6px;background:#fff;"></div>
<span class="t" style="left:1422.0px;top:667.29px;font-size:11px;transform:scaleY(1.13);transform-origin:0 84.65%;-webkit-text-stroke:0.22px;">None</span>
<div class="r" style="left:1660.0px;top:666.0px;width:17.0px;height:15.5px;background:#f0f0f0;"></div>
<svg class="r" style="left:1664px;top:671px" width="9" height="6" viewBox="0 0 9 6"><path d="M0.5,0.5 H8.5 L4.5,5 Z" fill="#111"/></svg>
<div class="r" style="left:1185.0px;top:710.0px;width:694.0px;height:260.5px;background:#ffffe6;border-radius:8px 8px 0 0;"></div>
<span class="t" style="left:1235.0px;top:730.64px;font-size:15.9px;">How the menu looks and where it is placed</span>
<span class="t" style="left:1245.0px;top:753.79px;font-size:11px;transform:scaleY(1.13);transform-origin:0 84.65%;-webkit-text-stroke:0.22px;">Presentation</span>
<div class="r" style="left:1417.3px;top:751.6px;width:285.1px;height:14.4px;background:#fff;"></div>
<span class="t" style="left:1419.5px;top:753.79px;font-size:11px;transform:scaleY(1.13);transform-origin:0 84.65%;-webkit-text-stroke:0.22px;">&lt;Name&gt;</span>
<span class="t" style="left:1245.0px;top:773.79px;font-size:11px;transform:scaleY(1.13);transform-origin:0 84.65%;-webkit-text-stroke:0.22px;">Are You Sure Question</span>
<div class="r" style="left:1417.3px;top:771.6px;width:285.1px;height:14.4px;background:#fff;"></div>
<span class="t" style="left:1245.0px;top:793.79px;font-size:11px;transform:scaleY(1.13);transform-origin:0 84.65%;-webkit-text-stroke:0.22px;">Are You Sure Execute Verb</span>
<div class="r" style="left:1417.3px;top:791.6px;width:58.7px;height:14.4px;background:#fff;"></div>
<span class="t" style="left:1489.4px;top:793.79px;font-size:11px;transform:scaleY(1.13);transform-origin:0 84.65%;-webkit-text-stroke:0.22px;">Cancel</span>
<div class="r" style="left:1546.8px;top:791.6px;width:105.2px;height:14.4px;background:#fff;"></div>
<span class="t" style="left:1245.0px;top:813.79px;font-size:11px;transform:scaleY(1.13);transform-origin:0 84.65%;-webkit-text-stroke:0.22px;">Icon</span>
<span class="t" style="left:1245.0px;top:833.79px;font-size:11px;transform:scaleY(1.13);transform-origin:0 84.65%;-webkit-text-stroke:0.22px;">Menu Group</span>
<div class="r" style="left:1417.3px;top:830.0px;width:233.7px;height:18.0px;background:#fff;"></div>
<div class="r" style="left:1633.0px;top:832.0px;width:17.0px;height:15.0px;background:#f0f0f0;"></div>
<svg class="r" style="left:1637px;top:837px" width="9" height="6" viewBox="0 0 9 6"><path d="M0.5,0.5 H8.5 L4.5,5 Z" fill="#111"/></svg>
<div class="r b" style="left:1665.0px;top:809.0px;width:39.6px;height:20.0px;background:#e4e4e4;border:1px solid #8e8e8e;font-size:9px;line-height:22.0px;color:#000;"><span style="display:inline-block;line-height:1;transform:scaleY(1.15);transform-origin:50% 84.65%;-webkit-text-stroke:0.18px">...</span></div>
<div class="r b" style="left:1665.0px;top:829.0px;width:39.6px;height:20.0px;background:#e4e4e4;border:1px solid #8e8e8e;font-size:9px;line-height:22.0px;color:#000;"><span style="display:inline-block;line-height:1;transform:scaleY(1.15);transform-origin:50% 84.65%;-webkit-text-stroke:0.18px">...</span></div>
<span class="t" style="left:1245.0px;top:853.79px;font-size:11px;transform:scaleY(1.13);transform-origin:0 84.65%;-webkit-text-stroke:0.22px;">Divider Group within Menu</span>
<div class="r" style="left:1417.3px;top:851.6px;width:285.1px;height:14.4px;background:#fff;"></div>
<span class="t" style="left:1245.0px;top:873.79px;font-size:11px;transform:scaleY(1.13);transform-origin:0 84.65%;-webkit-text-stroke:0.22px;">Sort order in Group</span>
<div class="r" style="left:1417.3px;top:871.6px;width:285.1px;height:14.4px;background:#fff;"></div>
<span class="t" style="left:1245.0px;top:893.79px;font-size:11px;transform:scaleY(1.13);transform-origin:0 84.65%;-webkit-text-stroke:0.22px;">Hint When Disabled</span>
<div class="r" style="left:1417.3px;top:891.6px;width:123.7px;height:14.4px;background:#fff;"></div>
<span class="t" style="left:1554.3px;top:893.79px;font-size:11px;transform:scaleY(1.13);transform-origin:0 84.65%;-webkit-text-stroke:0.22px;">Hint When Enabled</span>
<div class="r" style="left:1658.0px;top:891.6px;width:44.4px;height:14.4px;background:#fff;"></div>
<span class="t" style="left:1245.0px;top:913.79px;font-size:11px;transform:scaleY(1.13);transform-origin:0 84.65%;-webkit-text-stroke:0.22px;">Shortcut Key</span>
<div class="r" style="left:1417.3px;top:911.6px;width:58.7px;height:14.4px;background:#fff;"></div>
<span class="t" style="left:1245.0px;top:933.79px;font-size:11px;transform:scaleY(1.13);transform-origin:0 84.65%;-webkit-text-stroke:0.22px;">Modifier Alt</span>
<div class="r" style="left:1416.0px;top:930.4px;width:14.0px;height:13.6px;background:#fff;border:1px solid #333;"></div>
<span class="t" style="left:1489.4px;top:933.79px;font-size:11px;transform:scaleY(1.13);transform-origin:0 84.65%;-webkit-text-stroke:0.22px;">Modifier Control</span>
<div class="r" style="left:1656.0px;top:930.4px;width:14.0px;height:13.6px;background:#fff;border:1px solid #333;"></div>
<span class="t" style="left:1245.0px;top:953.79px;font-size:11px;transform:scaleY(1.13);transform-origin:0 84.65%;-webkit-text-stroke:0.22px;">Modifier Shift</span>
<div class="r" style="left:1416.0px;top:950.2px;width:14.0px;height:13.8px;background:#fff;border:1px solid #333;"></div>
<span class="t" style="left:1489.4px;top:953.79px;font-size:11px;transform:scaleY(1.13);transform-origin:0 84.65%;-webkit-text-stroke:0.22px;">Modifier Windows</span>
<div class="r" style="left:1656.0px;top:950.2px;width:14.0px;height:13.8px;background:#fff;border:1px solid #333;"></div>
<svg class="r" style="left:760px;top:126px;filter:drop-shadow(0 1px 2px rgba(60,20,20,0.3))" width="1160" height="884" viewBox="760 126 1160 884"><rect x="771.1" y="137.6" width="1138.6" height="859.9" rx="7.5" fill="none" stroke="#0cb0ee" stroke-width="4.2"/></svg>
<div class="r" style="left:98px;top:526px;width:71px;height:16px;border-radius:5px;background:linear-gradient(90deg,rgba(110,90,40,0.30),rgba(110,90,40,0.0) 22%);box-shadow:inset 0 2px 2px rgba(90,70,20,0.18);"></div>
<svg class="r" style="left:90px;top:518px;filter:drop-shadow(0 1px 1.5px rgba(0,0,0,0.35))" width="90" height="34" viewBox="90 518 90 34"><rect x="98.6" y="526.3" width="69.6" height="15.2" rx="5.5" fill="none" stroke="#0cb0ee" stroke-width="3.8"/></svg>
<svg class="r" style="left:0;top:0;filter:drop-shadow(1px 2px 2.5px rgba(0,0,0,0.38))" width="1920" height="1170" viewBox="0 0 1920 1170"><path d="M29.4,625.8 L89.7,563.9 L92.4,570.2 L100.3,542.7 L74.3,554.6 L80.9,556.3 L28.6,625.2 Z" fill="#0cb0ee"/><path d="M640.3,769.4 L753.5,706.8 L753.4,712.4 L770.0,689.7 L742.2,694.1 L747.2,696.6 L639.7,768.6 Z" fill="#0cb0ee"/><defs><radialGradient id="g1" cx="0.35" cy="0.3" r="0.8"><stop offset="0" stop-color="#3db6e8"/><stop offset="1" stop-color="#229fd6"/></radialGradient></defs><circle cx="23.5" cy="649.7" r="14.6" fill="url(#g1)" stroke="#2fb4ea" stroke-width="1.2"/><text x="23.5" y="655.1" font-size="15.5" fill="#fff" text-anchor="middle" font-family="Liberation Sans, sans-serif">1</text><defs><radialGradient id="g2" cx="0.35" cy="0.3" r="0.8"><stop offset="0" stop-color="#3db6e8"/><stop offset="1" stop-color="#229fd6"/></radialGradient></defs><circle cx="625.6" cy="778" r="14.6" fill="url(#g2)" stroke="#2fb4ea" stroke-width="1.2"/><text x="625.6" y="783.4" font-size="15.5" fill="#fff" text-anchor="middle" font-family="Liberation Sans, sans-serif">2</text></svg>
</body></html>
